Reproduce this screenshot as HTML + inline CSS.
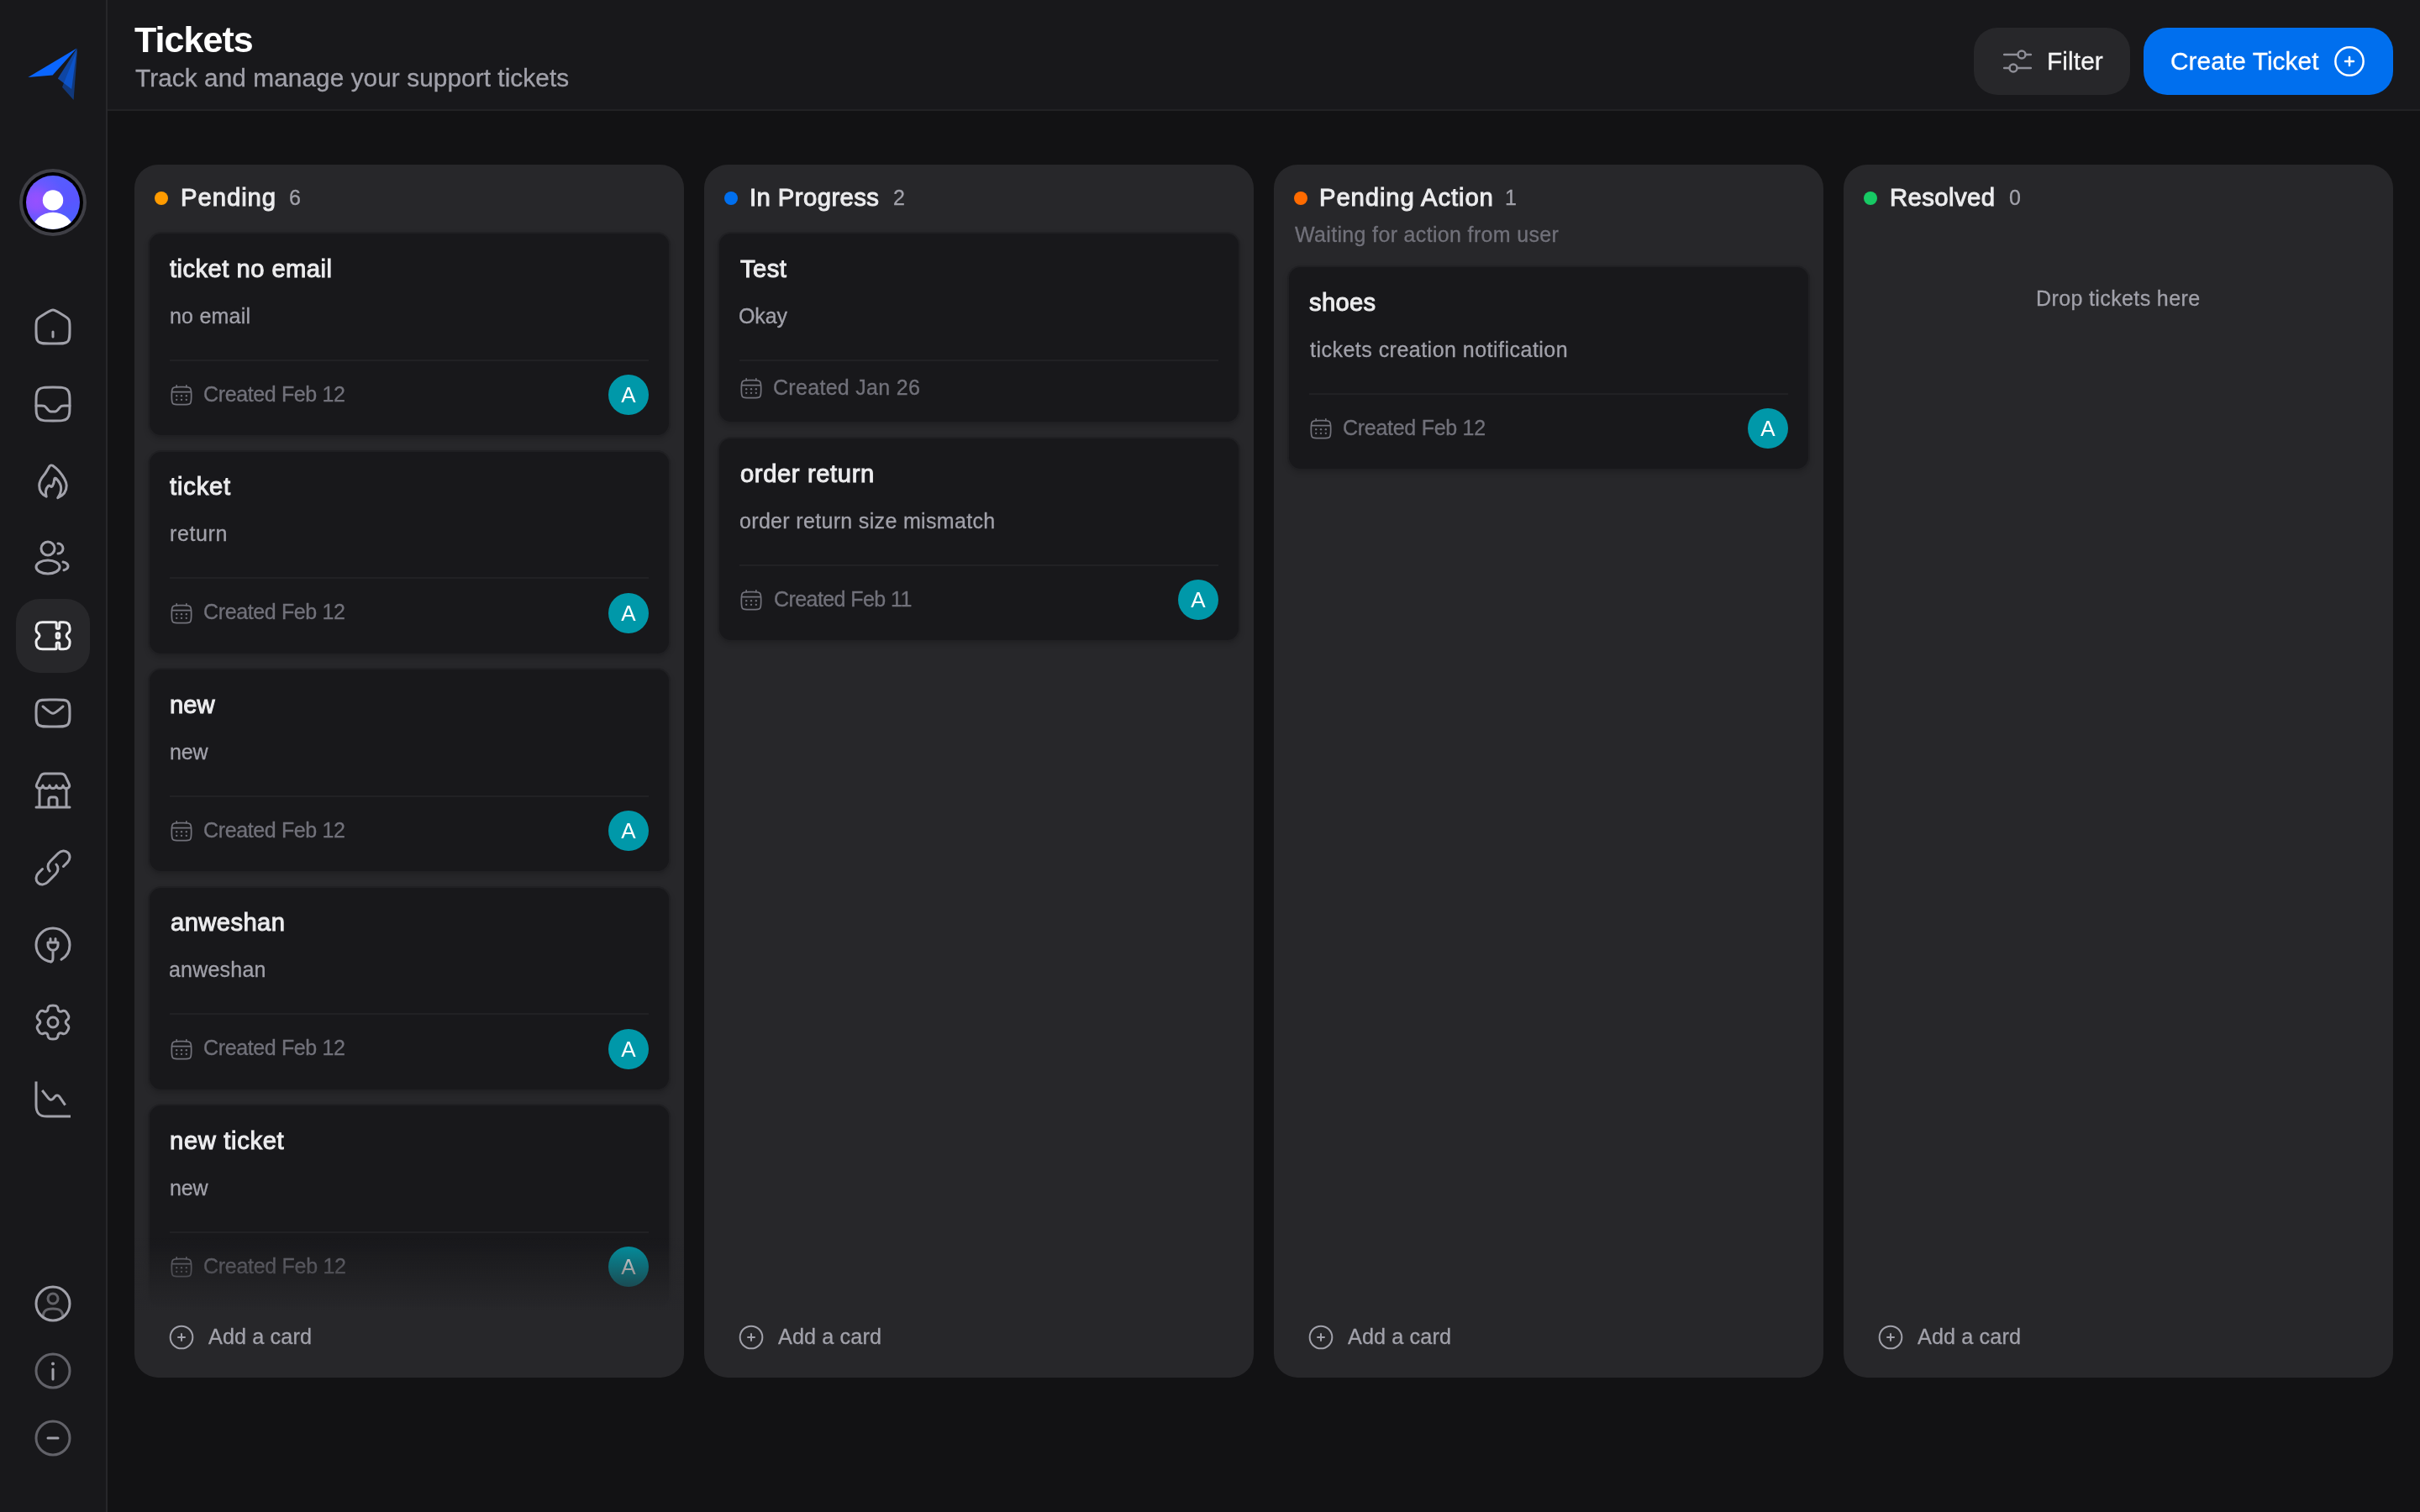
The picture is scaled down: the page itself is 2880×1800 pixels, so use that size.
<!DOCTYPE html>
<html lang="en">
<head>
<meta charset="utf-8">
<title>Tickets</title>
<style>
*{box-sizing:border-box;margin:0;padding:0}
html,body{width:2880px;height:1800px;overflow:hidden;background:#121214}
body{font-family:"Liberation Sans",Arial,sans-serif;color:#ececee;position:relative;-webkit-font-smoothing:antialiased}
#w{position:absolute;left:0;top:0;width:2880px;height:1800px}
/* sidebar */
#side{position:absolute;left:0;top:0;width:128px;height:1800px;background:#18181b;border-right:2px solid #27272a}
.nav{position:absolute;left:19px;width:88px;height:88px;border-radius:28px;display:flex;align-items:center;justify-content:center;color:#a1a1aa}
.nav svg{width:48px;height:48px;fill:none;stroke:currentColor;stroke-width:1.5;stroke-linecap:round;stroke-linejoin:round;overflow:visible}
.nav.on{background:#27272a;color:#ececee}
.nav.dim{color:#a1a1aa}
/* header */
#head{position:absolute;left:128px;top:0;width:2752px;height:132px;background:#18181b;border-bottom:2px solid #222225}
.t{position:absolute;white-space:nowrap;line-height:1;will-change:transform}
/* buttons */
.btn{position:absolute;top:33px;height:80px;border-radius:28px}
/* columns */
.col{position:absolute;top:196px;width:654px;height:1444px;background:#27272a;border-radius:28px}
.dot{position:absolute;width:16px;height:16px;border-radius:50%}
.card{position:absolute;width:622px;background:#18181b;border:2px solid #202023;border-radius:16px;box-shadow:0 3px 6px rgba(0,0,0,.16)}
.hr{position:absolute;width:570px;height:2px;background:#212124}
.av{will-change:transform;position:absolute;width:48px;height:48px;border-radius:50%;background:#0098a9;color:#fff;font-size:26px;line-height:49px;text-align:center}
.add{position:absolute;left:41px;top:1379px;width:32px;height:32px;color:#a1a1aa}
.addt{left:88px;top:1382px;font-size:28px;color:#a1a1aa}
svg.i{fill:none;stroke:currentColor;stroke-width:1.5;stroke-linecap:round;stroke-linejoin:round;overflow:visible;display:block}
</style>
</head>
<body>
<div id="w">
<div id="side">
<svg style="position:absolute;left:0;top:0;width:126px;height:140px" viewBox="0 0 126 140"><polygon points="91.3,57.5 33.4,91.9 62.6,89.6" fill="#0a66ff"/><polygon points="91.6,57.6 68.8,93.6 85.2,106.1" fill="#0a66ff" opacity=".6"/><polygon points="92.2,58.2 74,103.7 87.6,119" fill="#0a66ff" opacity=".42"/></svg>
<div style="position:absolute;left:23px;top:201px;width:80px;height:80px;border-radius:50%;background:#3f3f46"></div><div style="position:absolute;left:27px;top:205px;width:72px;height:72px;border-radius:50%;background:#000"></div><div style="position:absolute;left:31px;top:209px;width:64px;height:64px;border-radius:50%;overflow:hidden;background:radial-gradient(circle at 19% 47%,#9650ff 0%,#8c52ff 15%,rgba(122,86,255,.62) 32%,rgba(96,90,255,0) 56%),linear-gradient(160deg,#5560ff 0%,#5a55ff 55%,#4566ff 100%)"><svg viewBox="0 0 64 64" style="width:64px;height:64px;display:block"><circle cx="32" cy="29.4" r="12.2" fill="#fff"/><ellipse cx="32" cy="66" rx="24.5" ry="22.2" fill="#fff"/></svg></div>
<div class="nav" style="top:345px"><svg viewBox="0 0 24 24"><path d="M2 12.204c0-2.289 0-3.433.52-4.381.518-.949 1.467-1.537 3.364-2.715l2-1.241C9.889 2.622 10.892 2 12 2s2.11.622 4.116 1.867l2 1.241c1.897 1.178 2.846 1.766 3.365 2.715S22 9.915 22 12.203v1.522c0 3.9 0 5.851-1.172 7.063S17.771 22 14 22h-4c-3.771 0-5.657 0-6.828-1.212S2 17.626 2 13.725z"/><path d="M12 15v3"/></svg></div>
<div class="nav" style="top:437px"><svg viewBox="0 0 24 24"><path d="M2 12c0-4.714 0-7.071 1.464-8.536C4.93 2 7.286 2 12 2s7.071 0 8.535 1.464C22 4.93 22 7.286 22 12s0 7.071-1.465 8.535C19.072 22 16.714 22 12 22s-7.071 0-8.536-1.465C2 19.072 2 16.714 2 12Z"/><path d="M2 13h3.16c.905 0 1.358 0 1.756.183s.692.527 1.281 1.214l.606.706c.589.687.883 1.031 1.281 1.214s.85.183 1.756.183h.32c.905 0 1.358 0 1.756-.183s.692-.527 1.281-1.214l.606-.706c.589-.687.883-1.031 1.281-1.214S17.935 13 18.84 13H22"/></svg></div>
<div class="nav" style="top:529px"><svg viewBox="0 0 24 24"><path d="M8.1 21.1C5.5 19.8 3.85 17.3 3.85 14.46 3.85 11 6.3 8.8 7.3 7.5 8.4 6 9.2 4.3 9.9 3.1 10.3 2.4 11.3 2.3 12 2.7 14.5 4.4 17.3 7.7 18.8 10.5 19.7 12.2 20.1 13.4 20.1 14.46 20.1 17.8 18 20.5 14.86 21.8 16 20.3 16.84 18.3 16.84 16.05 16.84 13.7 14.8 11.2 13.9 10.3 13.5 9.9 12.9 10.1 12.85 10.7 12.75 12.2 12.3 13.9 11.6 14.9 11.3 15.3 10.9 15.3 10.6 15 10.1 14.5 9.6 14.4 9.2 14.8 8.2 15.8 7.7 17 7.7 18 7.7 19.2 7.8 20.2 8.1 21.1Z"/></svg></div>
<div class="nav" style="top:621px"><svg viewBox="0 0 24 24"><circle cx="9" cy="6" r="4"/><path d="M15 9a3 3 0 1 0 0-6"/><ellipse cx="9" cy="17" rx="7" ry="4"/><path d="M18 14c1.754.385 3 1.359 3 2.500 0 1.030-1.014 1.923-2.500 2.370"/></svg></div>
<div class="nav on" style="top:713px"><svg viewBox="0 0 24 24"><g transform="translate(0.03 -0.1)"><path d="M13.45 4Q14.05 4 14.05 4.6V7A.9.9 0 0 0 15.85 7V4.6Q15.85 4 16.45 4H18.2C20.7 4 22 5.3 22 7.7V8.7C22 9.6 21.6 9.9 21 10.3 20.3 10.75 20 11.3 20 12 20 12.7 20.3 13.25 21 13.7 21.6 14.1 22 14.4 22 15.3V16.3C22 18.7 20.7 20 18.2 20H16.45Q15.85 20 15.85 19.4V17A.9.9 0 0 0 14.05 17V19.4Q14.05 20 13.45 20H5.8C3.3 20 2 18.7 2 16.3V15.3C2 14.4 2.4 14.1 3 13.7 3.7 13.25 4 12.7 4 12 4 11.3 3.7 10.75 3 10.3 2.4 9.9 2 9.6 2 8.7V7.7C2 5.3 3.3 4 5.8 4Z"/><rect x="14.05" y="10.45" width="1.8" height="3.1" rx=".9"/></g></svg></div>
<div class="nav" style="top:805px"><svg viewBox="0 0 24 24"><path d="M2 12c0-3.771 0-5.657 1.172-6.828S6.229 4 10 4h4c3.771 0 5.657 0 6.828 1.172S22 8.229 22 12s0 5.657-1.172 6.828S17.771 20 14 20h-4c-3.771 0-5.657 0-6.828-1.172S2 15.771 2 12Z"/><path d="M6 8l2.159 1.800c1.837 1.530 2.755 2.295 3.841 2.295s2.005-.765 3.841-2.296L18 8"/></svg></div>
<div class="nav" style="top:897px"><svg viewBox="0 0 24 24"><path d="M7.2 2h9.6c1.3 0 2.1.5 2.6 1.6l2.3 4.9c.5 1.1-.3 2.25-1.7 2.25-1.1 0-2-.75-2-1.75 0 1-.9 1.75-2 1.75s-2-.75-2-1.75c0 1-.9 1.75-2 1.75s-2-.75-2-1.75c0 1-.9 1.75-2 1.75s-2-.75-2-1.75c0 1-.9 1.75-2 1.75-1.4 0-2.200-1.150-1.700-2.250l2.300-4.900c.500-1.100 1.300-1.600 2.600-1.600z"/><path d="M4 11v11M20 11v11M2 22.050h20M9.500 22v-4.500a1.500 1.500 0 0 1 1.500-1.500h2a1.500 1.500 0 0 1 1.500 1.500V22"/></svg></div>
<div class="nav" style="top:989px"><svg viewBox="0 0 24 24"><path d="M10.046 14c-1.506-1.512-1.370-4.100.303-5.779l4.848-4.866c1.673-1.680 4.250-1.816 5.757-.305 1.506 1.512 1.370 4.100-.303 5.779l-2.424 2.433"/><path d="M13.954 10c1.506 1.512 1.370 4.100-.303 5.779l-2.424 2.433-2.424 2.433c-1.673 1.680-4.250 1.816-5.757.305-1.506-1.512-1.370-4.100.303-5.779l2.424-2.433"/></svg></div>
<div class="nav" style="top:1081px"><svg viewBox="0 0 24 24"><path d="M11 21.950c-5.053-.502-9-4.765-9-9.950C2 6.477 6.477 2 12 2s10 4.477 10 10c0 3.700-2.010 6.930-5 8.660"/><path d="M9 10.500h6v1.600a3 3 0 0 1-6 0zM10.500 10.500V8.200M13.500 10.500V8.200M12 15.100v4.500c0 1.500-.400 2.200-1.200 2.350"/></svg></div>
<div class="nav" style="top:1173px"><svg viewBox="0 0 24 24"><circle cx="12" cy="12" r="3"/><path d="M13.765 2.152C13.398 2 12.932 2 12 2s-1.398 0-1.765.152a2 2 0 0 0-1.083 1.083c-.092.223-.129.484-.143.863a1.620 1.620 0 0 1-.790 1.353 1.620 1.620 0 0 1-1.567.008c-.336-.178-.579-.276-.820-.308a2 2 0 0 0-1.478.396C4.040 5.790 3.806 6.193 3.340 7s-.700 1.210-.751 1.605a2 2 0 0 0 .396 1.479c.148.192.355.353.676.555.473.297.777.803.777 1.361s-.304 1.064-.777 1.360c-.321.203-.529.364-.676.556a2 2 0 0 0-.396 1.479c.052.394.285.798.750 1.605.467.807.700 1.210 1.015 1.453a2 2 0 0 0 1.479.396c.240-.032.483-.130.819-.308a1.620 1.620 0 0 1 1.567.008c.483.280.770.795.790 1.353.014.380.050.640.143.863a2 2 0 0 0 1.083 1.083C10.602 22 11.068 22 12 22s1.398 0 1.765-.152a2 2 0 0 0 1.083-1.083c.092-.223.129-.483.143-.863.020-.558.307-1.074.790-1.353a1.620 1.620 0 0 1 1.567-.008c.336.178.579.276.819.308a2 2 0 0 0 1.479-.396c.315-.242.548-.646 1.014-1.453s.700-1.210.751-1.605a2 2 0 0 0-.396-1.479c-.148-.192-.355-.353-.676-.555A1.620 1.620 0 0 1 19.562 12c0-.558.304-1.064.777-1.360.321-.203.529-.364.676-.556a2 2 0 0 0 .396-1.479c-.052-.394-.285-.798-.750-1.605-.467-.807-.700-1.210-1.015-1.453a2 2 0 0 0-1.479-.396c-.240.032-.483.130-.820.308a1.620 1.620 0 0 1-1.566-.008 1.620 1.620 0 0 1-.790-1.353c-.014-.380-.050-.640-.143-.863a2 2 0 0 0-1.083-1.083Z"/></svg></div>
<div class="nav" style="top:1265px"><svg viewBox="0 0 24 24"><g stroke-linecap="butt"><path d="M2 1.2V15.500C2 20 3.900 22.050 8.400 22.050H22.500"/><path d="M5.600 6.500L9.200 11.100C10 12.200 11.100 12.600 12.100 11.500L13.100 10.300C13.900 9.300 15 9.200 15.800 10.200L19.300 15.300"/></g></svg></div>
<div class="nav dim" style="top:1508px"><svg viewBox="0 0 24 24"><circle cx="12" cy="12" r="10"/><g opacity=".55"><circle cx="12" cy="9" r="3"/><path d="M17.970 20c-.160-2.892-1.045-5-5.970-5s-5.810 2.108-5.970 5"/></g></svg></div>
<div class="nav dim" style="top:1588px"><svg viewBox="0 0 24 24"><circle cx="12" cy="12" r="10" opacity=".55"/><path d="M12 17v-6"/><circle cx="12" cy="7.800" r="1" fill="currentColor" stroke="none"/></svg></div>
<div class="nav dim" style="top:1668px"><svg viewBox="0 0 24 24"><circle cx="12" cy="12" r="10" opacity=".55"/><path d="M15 12H9"/></svg></div>
</div>
<div id="head"></div>
<div class="t" id="h_title" style="left:160.30px;top:25.6px;font-size:43px;color:#ffffff;font-weight:700;letter-spacing:-0.96px;">Tickets</div>
<div class="t" id="h_sub" style="left:160.60px;top:77.5px;font-size:29.8px;color:#a1a1aa;-webkit-text-stroke:.3px;letter-spacing:0.06px;">Track and manage your support tickets</div>
<div class="btn" style="left:2349px;width:186px;background:#27272a"></div>
<svg class="i" viewBox="0 0 24 24" style="width:40px;height:40px;position:absolute;left:2381.0px;top:53.0px;color:#8e8e97;stroke-width:1.5"><circle cx="15" cy="7.200" r="2.700"/><path d="M2.500 7.200h9.800M17.700 7.200h3.800"/><circle cx="9" cy="16.800" r="2.700"/><path d="M2.500 16.800h3.800M11.700 16.800h9.800"/></svg>
<div class="t" id="b_filter" style="left:2435.70px;top:57.9px;font-size:29.8px;color:#f4f4f5;-webkit-text-stroke:.3px;letter-spacing:0.11px;">Filter</div>
<div class="btn" style="left:2551px;width:297px;background:#006fee"></div>
<div class="t" id="b_create" style="left:2582.90px;top:57.9px;font-size:29.8px;color:#ffffff;-webkit-text-stroke:.3px;letter-spacing:0.08px;">Create Ticket</div>
<svg class="i" viewBox="0 0 24 24" style="width:40px;height:40px;position:absolute;left:2776.0px;top:53.0px;color:#ffffff;stroke-width:1.5"><circle cx="12" cy="12" r="10"/><path d="M15 12H9M12 9v6"/></svg>
<div class="col" style="left:160px"></div>
<div class="dot" style="left:184px;top:228px;background:#ff9b00"></div>
<div class="t" id="c1_t" style="left:215.00px;top:220.4px;font-size:29.3px;color:#ececee;-webkit-text-stroke:1px;letter-spacing:0.93px;">Pending</div>
<div class="t" id="c1_n" style="left:343.60px;top:222.9px;font-size:25px;color:#a1a1aa;-webkit-text-stroke:.3px;">6</div>
<svg class="i" viewBox="0 0 24 24" style="width:32px;height:32px;position:absolute;left:200.0px;top:1576.0px;color:#a1a1aa;stroke-width:1.5"><circle cx="12" cy="12" r="10"/><path d="M15 12H9M12 9v6"/></svg>
<div class="t" id="add1" style="left:248.00px;top:1578.6px;font-size:25.2px;color:#a1a1aa;-webkit-text-stroke:.3px;letter-spacing:0.13px;">Add a card</div>
<div class="card" style="left:176px;top:276px;height:244px"></div>
<div class="t" id="k10_t" style="left:202.00px;top:305.6px;font-size:29.2px;color:#ececee;-webkit-text-stroke:1px;letter-spacing:0.46px;">ticket no email</div>
<div class="t" id="k10_d" style="left:202.00px;top:363.8px;font-size:25px;color:#a1a1aa;-webkit-text-stroke:.3px;letter-spacing:0.21px;">no email</div>
<div class="hr" style="left:202px;top:427.8px"></div>
<svg class="i" viewBox="0 0 24 24" style="width:28px;height:28px;position:absolute;left:202.0px;top:456.3px;color:#71717a;stroke-width:1.5"><path d="M2 12c0-3.771 0-5.657 1.172-6.828S6.229 4 10 4h4c3.771 0 5.657 0 6.828 1.172S22 8.229 22 12v2c0 3.771 0 5.657-1.172 6.828S17.771 22 14 22h-4c-3.771 0-5.657 0-6.828-1.172S2 17.771 2 14z"/><path d="M7 4V2.500M17 4V2.500M2.500 9h19"/><g fill="currentColor" stroke="none"><circle cx="17" cy="13" r="1"/><circle cx="17" cy="17" r="1"/><circle cx="12" cy="13" r="1"/><circle cx="12" cy="17" r="1"/><circle cx="7" cy="13" r="1"/><circle cx="7" cy="17" r="1"/></g></svg>
<div class="t" id="k10_c" style="left:242.00px;top:456.9px;font-size:25px;color:#71717a;-webkit-text-stroke:.3px;letter-spacing:-0.37px;">Created Feb 12</div>
<div class="av" style="left:723.8px;top:446.1px">A</div>
<div class="card" style="left:176px;top:535.5px;height:244px"></div>
<div class="t" id="k11_t" style="left:202.00px;top:565.1px;font-size:29.2px;color:#ececee;-webkit-text-stroke:1px;letter-spacing:0.82px;">ticket</div>
<div class="t" id="k11_d" style="left:201.80px;top:623.3px;font-size:25px;color:#a1a1aa;-webkit-text-stroke:.3px;letter-spacing:0.60px;">return</div>
<div class="hr" style="left:202px;top:687.3px"></div>
<svg class="i" viewBox="0 0 24 24" style="width:28px;height:28px;position:absolute;left:202.0px;top:715.8px;color:#71717a;stroke-width:1.5"><path d="M2 12c0-3.771 0-5.657 1.172-6.828S6.229 4 10 4h4c3.771 0 5.657 0 6.828 1.172S22 8.229 22 12v2c0 3.771 0 5.657-1.172 6.828S17.771 22 14 22h-4c-3.771 0-5.657 0-6.828-1.172S2 17.771 2 14z"/><path d="M7 4V2.500M17 4V2.500M2.500 9h19"/><g fill="currentColor" stroke="none"><circle cx="17" cy="13" r="1"/><circle cx="17" cy="17" r="1"/><circle cx="12" cy="13" r="1"/><circle cx="12" cy="17" r="1"/><circle cx="7" cy="13" r="1"/><circle cx="7" cy="17" r="1"/></g></svg>
<div class="t" id="k11_c" style="left:242.00px;top:716.4px;font-size:25px;color:#71717a;-webkit-text-stroke:.3px;letter-spacing:-0.37px;">Created Feb 12</div>
<div class="av" style="left:723.8px;top:705.6px">A</div>
<div class="card" style="left:176px;top:795px;height:244px"></div>
<div class="t" id="k12_t" style="left:202.10px;top:824.6px;font-size:29.2px;color:#ececee;-webkit-text-stroke:1px;letter-spacing:-0.00px;">new</div>
<div class="t" id="k12_d" style="left:201.60px;top:882.8px;font-size:25px;color:#a1a1aa;-webkit-text-stroke:.3px;letter-spacing:-0.20px;">new</div>
<div class="hr" style="left:202px;top:946.8px"></div>
<svg class="i" viewBox="0 0 24 24" style="width:28px;height:28px;position:absolute;left:202.0px;top:975.3px;color:#71717a;stroke-width:1.5"><path d="M2 12c0-3.771 0-5.657 1.172-6.828S6.229 4 10 4h4c3.771 0 5.657 0 6.828 1.172S22 8.229 22 12v2c0 3.771 0 5.657-1.172 6.828S17.771 22 14 22h-4c-3.771 0-5.657 0-6.828-1.172S2 17.771 2 14z"/><path d="M7 4V2.500M17 4V2.500M2.500 9h19"/><g fill="currentColor" stroke="none"><circle cx="17" cy="13" r="1"/><circle cx="17" cy="17" r="1"/><circle cx="12" cy="13" r="1"/><circle cx="12" cy="17" r="1"/><circle cx="7" cy="13" r="1"/><circle cx="7" cy="17" r="1"/></g></svg>
<div class="t" id="k12_c" style="left:242.00px;top:975.9px;font-size:25px;color:#71717a;-webkit-text-stroke:.3px;letter-spacing:-0.37px;">Created Feb 12</div>
<div class="av" style="left:723.8px;top:965.1px">A</div>
<div class="card" style="left:176px;top:1054.5px;height:244px"></div>
<div class="t" id="k13_t" style="left:202.80px;top:1084.1px;font-size:29.2px;color:#ececee;-webkit-text-stroke:1px;letter-spacing:0.41px;">anweshan</div>
<div class="t" id="k13_d" style="left:201.10px;top:1142.3px;font-size:25px;color:#a1a1aa;-webkit-text-stroke:.3px;letter-spacing:0.21px;">anweshan</div>
<div class="hr" style="left:202px;top:1206.3px"></div>
<svg class="i" viewBox="0 0 24 24" style="width:28px;height:28px;position:absolute;left:202.0px;top:1234.8px;color:#71717a;stroke-width:1.5"><path d="M2 12c0-3.771 0-5.657 1.172-6.828S6.229 4 10 4h4c3.771 0 5.657 0 6.828 1.172S22 8.229 22 12v2c0 3.771 0 5.657-1.172 6.828S17.771 22 14 22h-4c-3.771 0-5.657 0-6.828-1.172S2 17.771 2 14z"/><path d="M7 4V2.500M17 4V2.500M2.500 9h19"/><g fill="currentColor" stroke="none"><circle cx="17" cy="13" r="1"/><circle cx="17" cy="17" r="1"/><circle cx="12" cy="13" r="1"/><circle cx="12" cy="17" r="1"/><circle cx="7" cy="13" r="1"/><circle cx="7" cy="17" r="1"/></g></svg>
<div class="t" id="k13_c" style="left:242.00px;top:1235.4px;font-size:25px;color:#71717a;-webkit-text-stroke:.3px;letter-spacing:-0.37px;">Created Feb 12</div>
<div class="av" style="left:723.8px;top:1224.6px">A</div>
<div class="card" style="left:176px;top:1314px;height:244px"></div>
<div class="t" id="k14_t" style="left:202.10px;top:1343.6px;font-size:29.2px;color:#ececee;-webkit-text-stroke:1px;letter-spacing:0.66px;">new ticket</div>
<div class="t" id="k14_d" style="left:201.60px;top:1401.8px;font-size:25px;color:#a1a1aa;-webkit-text-stroke:.3px;letter-spacing:-0.20px;">new</div>
<div class="hr" style="left:202px;top:1465.8px"></div>
<svg class="i" viewBox="0 0 24 24" style="width:28px;height:28px;position:absolute;left:202.0px;top:1494.3px;color:#71717a;stroke-width:1.5"><path d="M2 12c0-3.771 0-5.657 1.172-6.828S6.229 4 10 4h4c3.771 0 5.657 0 6.828 1.172S22 8.229 22 12v2c0 3.771 0 5.657-1.172 6.828S17.771 22 14 22h-4c-3.771 0-5.657 0-6.828-1.172S2 17.771 2 14z"/><path d="M7 4V2.500M17 4V2.500M2.500 9h19"/><g fill="currentColor" stroke="none"><circle cx="17" cy="13" r="1"/><circle cx="17" cy="17" r="1"/><circle cx="12" cy="13" r="1"/><circle cx="12" cy="17" r="1"/><circle cx="7" cy="13" r="1"/><circle cx="7" cy="17" r="1"/></g></svg>
<div class="t" id="k14_c" style="left:242.00px;top:1494.9px;font-size:25px;color:#71717a;-webkit-text-stroke:.3px;letter-spacing:-0.29px;">Created Feb 12</div>
<div class="av" style="left:723.8px;top:1484.1px">A</div>
<div style="position:absolute;left:160px;top:1474px;width:654px;height:86px;background:linear-gradient(to bottom,rgba(39,39,42,0) 0%,rgba(39,39,42,1) 100%)"></div>
<div style="position:absolute;left:160px;top:1560px;width:654px;height:12px;background:#27272a"></div>
<div class="col" style="left:838px"></div>
<div class="dot" style="left:862px;top:228px;background:#006fee"></div>
<div class="t" id="c2_t" style="left:892.30px;top:220.4px;font-size:29.3px;color:#ececee;-webkit-text-stroke:1px;letter-spacing:0.42px;">In Progress</div>
<div class="t" id="c2_n" style="left:1063.40px;top:222.9px;font-size:25px;color:#a1a1aa;-webkit-text-stroke:.3px;">2</div>
<svg class="i" viewBox="0 0 24 24" style="width:32px;height:32px;position:absolute;left:878.0px;top:1576.0px;color:#a1a1aa;stroke-width:1.5"><circle cx="12" cy="12" r="10"/><path d="M15 12H9M12 9v6"/></svg>
<div class="t" id="add2" style="left:926.00px;top:1578.6px;font-size:25.2px;color:#a1a1aa;-webkit-text-stroke:.3px;letter-spacing:0.13px;">Add a card</div>
<div class="card" style="left:854px;top:276px;height:228px"></div>
<div class="t" id="k20_t" style="left:880.50px;top:305.6px;font-size:29.2px;color:#ececee;-webkit-text-stroke:1px;letter-spacing:0.43px;">Test</div>
<div class="t" id="k20_d" style="left:879.10px;top:363.8px;font-size:25px;color:#a1a1aa;-webkit-text-stroke:.3px;letter-spacing:-0.10px;">Okay</div>
<div class="hr" style="left:880px;top:427.8px"></div>
<svg class="i" viewBox="0 0 24 24" style="width:28px;height:28px;position:absolute;left:880.0px;top:448.3px;color:#71717a;stroke-width:1.5"><path d="M2 12c0-3.771 0-5.657 1.172-6.828S6.229 4 10 4h4c3.771 0 5.657 0 6.828 1.172S22 8.229 22 12v2c0 3.771 0 5.657-1.172 6.828S17.771 22 14 22h-4c-3.771 0-5.657 0-6.828-1.172S2 17.771 2 14z"/><path d="M7 4V2.500M17 4V2.500M2.500 9h19"/><g fill="currentColor" stroke="none"><circle cx="17" cy="13" r="1"/><circle cx="17" cy="17" r="1"/><circle cx="12" cy="13" r="1"/><circle cx="12" cy="17" r="1"/><circle cx="7" cy="13" r="1"/><circle cx="7" cy="17" r="1"/></g></svg>
<div class="t" id="k20_c" style="left:919.50px;top:449.0px;font-size:25px;color:#71717a;-webkit-text-stroke:.3px;letter-spacing:0.30px;">Created Jan 26</div>
<div class="card" style="left:854px;top:520px;height:244px"></div>
<div class="t" id="k21_t" style="left:881.40px;top:549.6px;font-size:29.2px;color:#ececee;-webkit-text-stroke:1px;letter-spacing:0.61px;">order return</div>
<div class="t" id="k21_d" style="left:879.70px;top:607.8px;font-size:25px;color:#a1a1aa;-webkit-text-stroke:.3px;letter-spacing:0.33px;">order return size mismatch</div>
<div class="hr" style="left:880px;top:671.8px"></div>
<svg class="i" viewBox="0 0 24 24" style="width:28px;height:28px;position:absolute;left:880.0px;top:700.3px;color:#71717a;stroke-width:1.5"><path d="M2 12c0-3.771 0-5.657 1.172-6.828S6.229 4 10 4h4c3.771 0 5.657 0 6.828 1.172S22 8.229 22 12v2c0 3.771 0 5.657-1.172 6.828S17.771 22 14 22h-4c-3.771 0-5.657 0-6.828-1.172S2 17.771 2 14z"/><path d="M7 4V2.500M17 4V2.500M2.500 9h19"/><g fill="currentColor" stroke="none"><circle cx="17" cy="13" r="1"/><circle cx="17" cy="17" r="1"/><circle cx="12" cy="13" r="1"/><circle cx="12" cy="17" r="1"/><circle cx="7" cy="13" r="1"/><circle cx="7" cy="17" r="1"/></g></svg>
<div class="t" id="k21_c" style="left:920.70px;top:700.9px;font-size:25px;color:#71717a;-webkit-text-stroke:.3px;letter-spacing:-0.57px;">Created Feb 11</div>
<div class="av" style="left:1401.8px;top:690.1px">A</div>
<div class="col" style="left:1516px"></div>
<div class="dot" style="left:1540px;top:228px;background:#ff6b00"></div>
<div class="t" id="c3_t" style="left:1570.10px;top:220.4px;font-size:29.3px;color:#ececee;-webkit-text-stroke:1px;letter-spacing:0.88px;">Pending Action</div>
<div class="t" id="c3_n" style="left:1791.40px;top:222.9px;font-size:25px;color:#a1a1aa;-webkit-text-stroke:.3px;">1</div>
<svg class="i" viewBox="0 0 24 24" style="width:32px;height:32px;position:absolute;left:1556.0px;top:1576.0px;color:#a1a1aa;stroke-width:1.5"><circle cx="12" cy="12" r="10"/><path d="M15 12H9M12 9v6"/></svg>
<div class="t" id="add3" style="left:1604.00px;top:1578.6px;font-size:25.2px;color:#a1a1aa;-webkit-text-stroke:.3px;letter-spacing:0.13px;">Add a card</div>
<div class="t" id="c3_sub" style="left:1541.00px;top:267.0px;font-size:25px;color:#71717a;-webkit-text-stroke:.3px;letter-spacing:0.34px;">Waiting for action from user</div>
<div class="card" style="left:1532px;top:316px;height:244px"></div>
<div class="t" id="k30_t" style="left:1558.00px;top:345.6px;font-size:29.2px;color:#ececee;-webkit-text-stroke:1px;letter-spacing:0.32px;">shoes</div>
<div class="t" id="k30_d" style="left:1558.50px;top:403.8px;font-size:25px;color:#a1a1aa;-webkit-text-stroke:.3px;letter-spacing:0.48px;">tickets creation notification</div>
<div class="hr" style="left:1558px;top:467.8px"></div>
<svg class="i" viewBox="0 0 24 24" style="width:28px;height:28px;position:absolute;left:1558.0px;top:496.3px;color:#71717a;stroke-width:1.5"><path d="M2 12c0-3.771 0-5.657 1.172-6.828S6.229 4 10 4h4c3.771 0 5.657 0 6.828 1.172S22 8.229 22 12v2c0 3.771 0 5.657-1.172 6.828S17.771 22 14 22h-4c-3.771 0-5.657 0-6.828-1.172S2 17.771 2 14z"/><path d="M7 4V2.500M17 4V2.500M2.500 9h19"/><g fill="currentColor" stroke="none"><circle cx="17" cy="13" r="1"/><circle cx="17" cy="17" r="1"/><circle cx="12" cy="13" r="1"/><circle cx="12" cy="17" r="1"/><circle cx="7" cy="13" r="1"/><circle cx="7" cy="17" r="1"/></g></svg>
<div class="t" id="k30_c" style="left:1597.70px;top:496.9px;font-size:25px;color:#71717a;-webkit-text-stroke:.3px;letter-spacing:-0.28px;">Created Feb 12</div>
<div class="av" style="left:2079.8px;top:486.1px">A</div>
<div class="col" style="left:2194px"></div>
<div class="dot" style="left:2218px;top:228px;background:#17c964"></div>
<div class="t" id="c4_t" style="left:2248.70px;top:220.4px;font-size:29.3px;color:#ececee;-webkit-text-stroke:1px;letter-spacing:0.40px;">Resolved</div>
<div class="t" id="c4_n" style="left:2390.80px;top:222.9px;font-size:25px;color:#a1a1aa;-webkit-text-stroke:.3px;">0</div>
<svg class="i" viewBox="0 0 24 24" style="width:32px;height:32px;position:absolute;left:2234.0px;top:1576.0px;color:#a1a1aa;stroke-width:1.5"><circle cx="12" cy="12" r="10"/><path d="M15 12H9M12 9v6"/></svg>
<div class="t" id="add4" style="left:2282.00px;top:1578.6px;font-size:25.2px;color:#a1a1aa;-webkit-text-stroke:.3px;letter-spacing:0.13px;">Add a card</div>
<div class="t" id="c4_drop" style="left:2423.00px;top:342.5px;font-size:25px;color:#a1a1aa;-webkit-text-stroke:.3px;letter-spacing:0.38px;">Drop tickets here</div>
</div>
<script>(function(){var w=window.innerWidth;if(w&&w!==2880){var e=document.getElementById("w");e.style.transformOrigin="0 0";e.style.transform="scale("+(w/2880)+")";}})();</script>
</body>
</html>
